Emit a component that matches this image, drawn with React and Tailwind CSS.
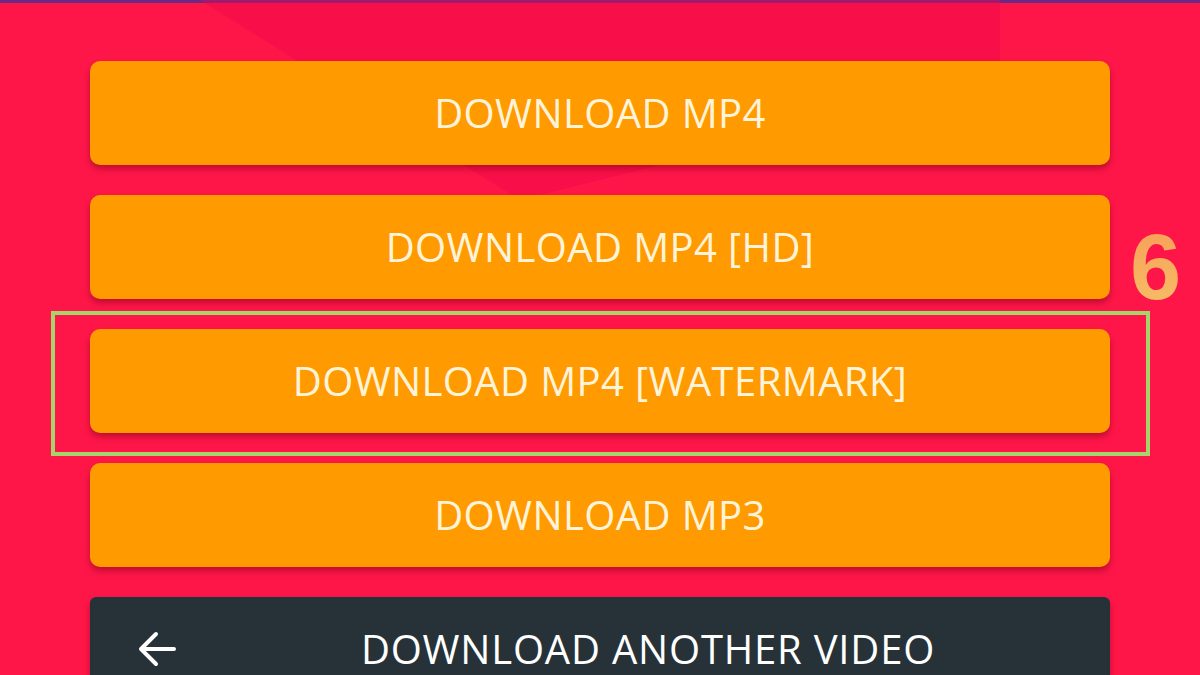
import React from "react";

const options = ["DOWNLOAD MP4", "DOWNLOAD MP4 [HD]", "DOWNLOAD MP4 [WATERMARK]", "DOWNLOAD MP3"];

function App() {
    return (
        <div
            className="relative w-[1200px] h-[675px] overflow-hidden bg-[#fe1649]"
            style={{ fontFamily: '"Open Sans", sans-serif' }}>
            {/* top bar strip */}
            <div className="h-[3px] bg-[#6b2a86]" />
            {/* soft diagonal shading */}
            <div className="absolute left-[200px] top-0 w-[800px] h-[200px] bg-[#f0064c] opacity-40 [clip-path:polygon(0_0,100%_0,100%_40%,40%_100%)]" />

            <div className="relative flex flex-col gap-[30px] pt-[58px] px-[90px]">
                {options.map((label) => (
                    <button
                        key={label}
                        className="h-[104px] w-full rounded-[10px] bg-[#ff9a00] text-[#fff4da] text-[40px] tracking-[0.01em] shadow-[0_4px_6px_rgba(120,0,20,0.45)] flex items-center justify-center">
                        {label}
                    </button>
                ))}
                <button className="h-[104px] w-full rounded-[6px] bg-[#263238] text-white text-[40px] tracking-[0.02em] flex items-center pl-[48px] shadow-[0_4px_6px_rgba(120,0,20,0.45)]">
                    <svg width="38" height="36" viewBox="0 0 38 36" fill="none" stroke="white" strokeWidth="4" strokeLinecap="round" strokeLinejoin="round">
                        <path d="M36 18H4M18 3L3 18l15 15" />
                    </svg>
                    <span className="flex-1 text-center pl-[10px]">DOWNLOAD ANOTHER VIDEO</span>
                </button>
            </div>

            {/* annotation frame */}
            <div className="absolute left-[51px] top-[311px] w-[1099px] h-[145px] border-4 border-solid border-[#a6d46a]" />
            <div
                className="absolute left-[1130px] top-[221px] text-[92px] font-bold leading-none bg-gradient-to-b from-[#f79e57] to-[#f6bf66] bg-clip-text text-transparent"
                style={{ fontFamily: '"Liberation Sans", Arial, sans-serif' }}>
                6
            </div>
        </div>
    );
}

export default App;
